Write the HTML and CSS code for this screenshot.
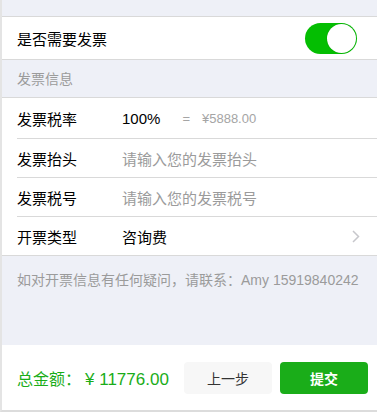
FILE: index.html
```
<!DOCTYPE html>
<html lang="zh-CN">
<head>
  <meta charset="UTF-8" />
  <title>发票信息</title>
  <link rel="stylesheet" href="styles.css">
</head>
<body>
  <div class="page">
    <div class="gap-top"></div>

    <div class="cell cell-switch">
      <span class="label">是否需要发票</span>
      <span class="switch on"><span class="knob"></span></span>
    </div>

    <div class="section-title">发票信息</div>

    <div class="group">
      <div class="cell row first">
        <span class="label">发票税率</span>
        <span class="value">100%</span>
        <span class="calc"><span class="eq">=</span>¥5888.00</span>
      </div>
      <div class="cell row">
        <span class="label">发票抬头</span>
        <span class="value placeholder">请输入您的发票抬头</span>
      </div>
      <div class="cell row">
        <span class="label">发票税号</span>
        <span class="value placeholder">请输入您的发票税号</span>
      </div>
      <div class="cell row last">
        <span class="label">开票类型</span>
        <span class="value">咨询费</span>
        <svg class="arrow" width="8" height="13" viewBox="0 0 8 13"><path d="M1 1l5.5 5.5L1 12" fill="none" stroke="#c7c7cc" stroke-width="1.5"/></svg>
      </div>
    </div>

    <div class="tips">如对开票信息有任何疑问，请联系：Amy 15919840242</div>

    <div class="footer">
      <div class="total">总金额：<span class="amount">¥ 11776.00</span></div>
      <button class="btn btn-default">上一步</button>
      <button class="btn btn-primary">提交</button>
    </div>
  </div>
</body>
</html>
```

FILE: styles.css
```
body {
  margin: 0;
  font-family: "Liberation Sans", "Noto Sans CJK SC", sans-serif;
  background-color: #ffffff;
  color: #000;
}
.page {
  border-left: 2px solid #e4e4e4;
  border-bottom: 2px solid #dcdcdc;
  background-color: #eef0f7;
  height: 410px;
  display: flex;
  flex-direction: column;
}
.gap-top {
  height: 16px;
  border-bottom: 1px solid #d9d9d9;
}
.cell {
  display: flex;
  align-items: center;
  background-color: #fff;
  padding: 0 15px;
  font-size: 15px;
}
.cell-switch {
  height: 42px;
  justify-content: space-between;
  border-bottom: 1px solid #d9d9d9;
  padding-right: 20px;
}
.switch {
  width: 52px;
  height: 31px;
  border-radius: 16px;
  background-color: #04be02;
  position: relative;
}
.switch .knob {
  position: absolute;
  top: 1px;
  right: 1px;
  width: 29px;
  height: 29px;
  border-radius: 50%;
  background-color: #fff;
  box-shadow: 0 0 1px rgba(0,0,0,0.3);
}
.section-title {
  height: 37px;
  line-height: 39px;
  padding-left: 15px;
  font-size: 14px;
  color: #9b9b9b;
  border-bottom: 1px solid #d9d9d9;
}
.group {
  background-color: #fff;
  border-bottom: 1px solid #d9d9d9;
}
.row {
  height: 38px;
  padding-left: 0;
  padding-right: 17px;
  margin-left: 15px;
  border-bottom: 1px solid #d9d9d9;
}
.row.first {
  height: 40px;
}
.row.last {
  border-bottom: none;
}
.row .label {
  width: 105px;
}
.value {
  flex: 1;
}
.row.first .value {
  flex: none;
}
.placeholder {
  color: #9b9b9b;
}
.calc {
  margin-left: 22px;
  font-size: 13px;
  color: #a5a5a5;
}
.calc .eq {
  margin-right: 12px;
}
.arrow {
  display: block;
}
.tips {
  height: 89px;
  padding: 13px 0 0 15px;
  box-sizing: border-box;
  font-size: 14px;
  white-space: nowrap;
  color: #9b9b9b;
}
.footer {
  flex: 1;
  background-color: #fff;
  display: flex;
  align-items: center;
  padding: 0 9px 0 15px;
}
.total {
  flex: 1;
  font-size: 16px;
  color: #1aad19;
  padding-top: 1px;
}
.amount {
  font-size: 17px;
  margin-left: 4px;
}
.btn {
  width: 88px;
  height: 32px;
  border: none;
  border-radius: 4px;
  font-family: inherit;
  font-size: 14px;
  margin-left: 8px;
  margin-top: 1px;
}
.btn-default {
  background-color: #f7f7f7;
  color: #333;
}
.btn-primary {
  background-color: #1aad19;
  color: #fff;
  font-weight: bold;
}
```
